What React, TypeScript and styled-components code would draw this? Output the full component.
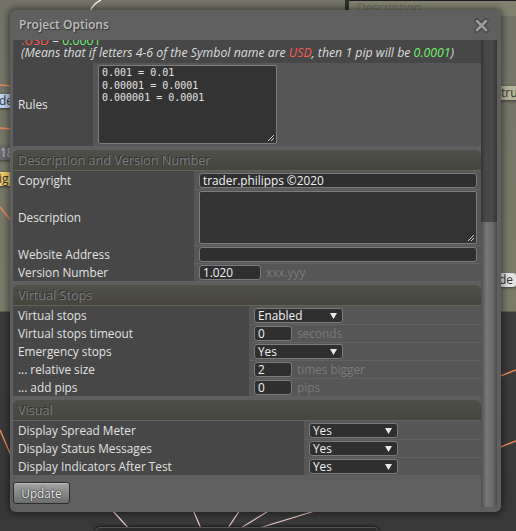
import { useLayoutEffect, useRef } from "react";
import styled, { createGlobalStyle } from "styled-components";

const GlobalStyle = createGlobalStyle`
  html, body { margin: 0; padding: 0; }
  body {
    width: 516px;
    height: 531px;
    overflow: hidden;
    background: #3b3b3b;
    font-family: "Open Sans", "Noto Sans", "Liberation Sans", sans-serif;
  }
`;

// chart canvas that lies behind the dialog
const Desktop = styled.div`
  position: relative;
  width: 516px;
  height: 531px;
  overflow: hidden;
  background: linear-gradient(to bottom, #727266 0, #7b7b6a 311px, #3c3c3c 312px, #383838 100%);
`;

const Wires = styled.svg`
  position: absolute;
  left: 0;
  top: 0;
`;

const TopNode = styled.div`
  position: absolute;
  left: 345px;
  top: -14px;
  width: 190px;
  height: 30px;
  box-sizing: border-box;
  border-top: 15px solid #1e1e1e;
  border-left: 4px solid #2f2f2f;
  background: #818170;
  padding-left: 8px;
  font-size: 12px;
  line-height: 14px;
  color: #6a6a5e;
`;

const BottomNode = styled.div`
  position: absolute;
  left: 95px;
  top: 527px;
  width: 282px;
  height: 24px;
  border-radius: 5px;
  background: #2c2c2c;
  border: 1px solid #555;
  box-shadow: 0 -1px 3px rgba(0, 0, 0, 0.6);
`;

const Tag = styled.span<{ $x: number; $y: number; $bg: string; $fg?: string }>`
  position: absolute;
  left: ${(p) => p.$x}px;
  top: ${(p) => p.$y}px;
  padding: 0 3px;
  height: 14px;
  line-height: 14px;
  font-size: 12px;
  border-radius: 3px;
  background: ${(p) => p.$bg};
  color: ${(p) => p.$fg || "#333"};
  box-shadow: 0 1px 3px rgba(0, 0, 0, 0.5);
`;

const Dialog = styled.div`
  position: absolute;
  left: 10px;
  top: 10px;
  width: 491px;
  height: 502px;
  display: flex;
  flex-direction: column;
  background: #5f5f5f;
  border-radius: 6px;
  box-shadow: 0 0 6px 2px rgba(0, 0, 0, 0.45);
`;

const TitleBar = styled.div`
  height: 30px;
  flex: none;
  display: flex;
  align-items: center;
  justify-content: space-between;
  padding: 0 12px 0 9px;
`;

const Title = styled.div`
  font-size: 12px;
  font-weight: 600;
  color: #bdbdbd;
  text-shadow: 1px 1px 1px #353535;
  margin-top: -1px;
`;

const CloseButton = styled.svg`
  display: block;
`;

const Body = styled.div`
  flex: 1;
  min-height: 0;
  display: flex;
  padding: 0 4px 5px 3px;
`;

const Scroller = styled.div`
  width: 468px;
  overflow: hidden;
`;

const ScrollBar = styled.div`
  width: 16px;
  display: flex;
  flex-direction: column;
  justify-content: flex-end;
  background: linear-gradient(to right, #333 0, #474747 25%, #4a4a4a 70%, #363636 100%);
`;

const Thumb = styled.div`
  height: 285px;
  background: linear-gradient(to right, #4e4e4e 0, #777 35%, #6c6c6c 70%, #4c4c4c 100%);
`;

const Note = styled.div`
  background: #474747;
  padding: 3px 8px 4px;
  font-size: 12.3px;
  line-height: 12px;
  color: #dcdcdc;
`;

const NoteLine = styled.div<{ $italic?: boolean }>`
  font-style: ${(p) => (p.$italic ? "italic" : "normal")};
  white-space: nowrap;
`;

const Red = styled.span`
  color: #ff5a4e;
`;

const Green = styled.span`
  color: #6ef06e;
`;

const Section = styled.div`
  margin-top: 4px;
  display: flex;
  flex-direction: column;
`;

const SectionHead = styled.div`
  height: 20px;
  border-radius: 5px 5px 0 0;
  background: linear-gradient(to bottom, #50504b, #46463f);
  border-bottom: 1px solid #63635a;
  padding-left: 5px;
  font-size: 12.6px;
  line-height: 21px;
  color: #7c7c7c;
  text-shadow: -1px -1px 0 #2c2c2c;
`;

const Row = styled.div<{ $label: number }>`
  display: grid;
  grid-template-columns: ${(p) => p.$label}px 1fr;
`;

const Label = styled.div`
  background: #474747;
  padding-left: 5px;
  display: flex;
  align-items: center;
  font-size: 11.8px;
  line-height: 15px;
  color: #e2e2e2;
  white-space: nowrap;
`;

const Value = styled.div<{ $first?: boolean }>`
  background: #565656;
  border-top: 1px solid ${(p) => (p.$first ? "transparent" : "#616161")};
  padding: 1px 4px 1px 5px;
  height: 15px;
  line-height: 15px;
  display: flex;
  align-items: center;
  gap: 5px;
`;

const RulesValue = styled(Value)`
  height: auto;
  padding: 1px 4px 2px 5px;
`;

const DescValue = styled(Value)`
  height: auto;
`;

const Field = styled.div<{ $w?: number }>`
  box-sizing: border-box;
  width: ${(p) => (p.$w ? `${p.$w}px` : "100%")};
  height: 15px;
  border: 1px solid #7b7b7b;
  border-radius: 3px;
  background: #2f2f2f;
  padding: 0 3px;
  font-size: 11.8px;
  line-height: 13px;
  color: #f2f2f2;
  white-space: nowrap;
  overflow: hidden;
`;

const Picker = styled(Field)`
  display: flex;
  align-items: center;
  justify-content: space-between;
  padding-right: 5px;
`;

const Hint = styled.span`
  font-size: 11.8px;
  line-height: 15px;
  color: #7a7a7a;
`;

const TextBox = styled.div<{ $w: number; $h: number; $mono?: boolean }>`
  box-sizing: border-box;
  width: ${(p) => p.$w}px;
  height: ${(p) => p.$h}px;
  border: 1px solid #7d7d7d;
  border-radius: 2px;
  background: #333;
  padding: 1px 3px 3px;
  display: flex;
  flex-direction: column;
  font-family: ${(p) => (p.$mono ? `"DejaVu Sans Mono", monospace` : "inherit")};
  font-size: 10px;
  line-height: 12.5px;
  color: #e4e4e4;
  white-space: pre;
`;

const Lines = styled.div`
  flex: 1;
`;

const Grip = styled.svg`
  align-self: flex-end;
  margin: 0 -2px -2px 0;
`;

const Footer = styled.div`
  padding: 6px 0 4px;
`;

const Button = styled.button`
  width: 57px;
  height: 22px;
  padding: 0;
  border: 1px solid #2e2e2e;
  border-radius: 3px;
  background: linear-gradient(to bottom, #a4a4a4, #8a8a8a 45%, #6e6e6e);
  box-shadow: inset 0 1px 0 #bdbdbd;
  font-family: inherit;
  font-size: 11.8px;
  color: #ececec;
  text-shadow: 0 0 2px #222, 0 0 1px #222;
`;

function Caret() {
  return (
    <svg width="7" height="6" viewBox="0 0 7 6">
      <polygon points="0,0 7,0 3.5,6" fill="#e8e8e8" />
    </svg>
  );
}

function Select({ value, w }: { value: string; w: number }) {
  return (
    <Picker $w={w}>
      <span>{value}</span>
      <Caret />
    </Picker>
  );
}

function ResizeGrip() {
  return (
    <Grip width="9" height="9" viewBox="0 0 9 9">
      <line x1="8" y1="2" x2="2" y2="8" stroke="#cfcfcf" strokeWidth="1" />
      <line x1="8" y1="5" x2="5" y2="8" stroke="#cfcfcf" strokeWidth="1" />
    </Grip>
  );
}

type Item = { label: string; control: JSX.Element; tall?: boolean };

function Group({ title, label, items }: { title: string; label: number; items: Item[] }) {
  return (
    <Section>
      <SectionHead>{title}</SectionHead>
      {items.map((it, i) => {
        const Cell = it.tall ? DescValue : Value;
        return (
          <Row key={it.label} $label={label}>
            <Label>{it.label}</Label>
            <Cell $first={i === 0}>{it.control}</Cell>
          </Row>
        );
      })}
    </Section>
  );
}

export default function App() {
  const scroller = useRef<HTMLDivElement>(null);

  useLayoutEffect(() => {
    if (scroller.current) scroller.current.scrollTop = 8;
  }, []);

  const description: Item[] = [
    { label: "Copyright", control: <Field>trader.philipps ©2020</Field> },
    {
      label: "Description",
      tall: true,
      control: (
        <TextBox $w={278} $h={53}>
          <Lines />
          <ResizeGrip />
        </TextBox>
      ),
    },
    { label: "Website Address", control: <Field /> },
    {
      label: "Version Number",
      control: (
        <>
          <Field $w={62}>1.020</Field>
          <Hint>xxx.yyy</Hint>
        </>
      ),
    },
  ];

  const stops: Item[] = [
    { label: "Virtual stops", control: <Select value="Enabled" w={89} /> },
    {
      label: "Virtual stops timeout",
      control: (
        <>
          <Field $w={38}>0</Field>
          <Hint>seconds</Hint>
        </>
      ),
    },
    { label: "Emergency stops", control: <Select value="Yes" w={89} /> },
    {
      label: "... relative size",
      control: (
        <>
          <Field $w={38}>2</Field>
          <Hint>times bigger</Hint>
        </>
      ),
    },
    {
      label: "... add pips",
      control: (
        <>
          <Field $w={38}>0</Field>
          <Hint>pips</Hint>
        </>
      ),
    },
  ];

  const visual: Item[] = [
    { label: "Display Spread Meter", control: <Select value="Yes" w={89} /> },
    { label: "Display Status Messages", control: <Select value="Yes" w={89} /> },
    { label: "Display Indicators After Test", control: <Select value="Yes" w={89} /> },
  ];

  return (
    <>
      <GlobalStyle />
      <Desktop>
        <Wires width="516" height="531" viewBox="0 0 516 531">
          <path d="M90 11 Q94 3 101 0" stroke="#f0f0f0" strokeWidth="1.4" fill="none" />
          <line x1="0" y1="85" x2="12" y2="86" stroke="#ef8a58" strokeWidth="1.4" />
          <line x1="0" y1="128" x2="12" y2="129" stroke="#ef8a58" strokeWidth="1.4" />
          <line x1="0" y1="207" x2="12" y2="222" stroke="#ef8a58" strokeWidth="1.4" />
          <line x1="0" y1="430" x2="12" y2="458" stroke="#ef8a58" strokeWidth="1.4" />
          <line x1="498" y1="377" x2="516" y2="370" stroke="#ef8a58" strokeWidth="1.4" />
          <line x1="498" y1="448" x2="516" y2="441" stroke="#ef8a58" strokeWidth="1.4" />
          <line x1="348" y1="0" x2="382" y2="12" stroke="#f0b0a0" strokeWidth="1.2" />
          <line x1="112" y1="510" x2="131" y2="531" stroke="#f4cccc" strokeWidth="1.2" />
          <line x1="193" y1="510" x2="202" y2="531" stroke="#f4cccc" strokeWidth="1.2" />
          <line x1="240" y1="510" x2="226" y2="531" stroke="#f4cccc" strokeWidth="1.2" />
          <line x1="270" y1="510" x2="236" y2="531" stroke="#f4cccc" strokeWidth="1.2" />
          <line x1="318" y1="510" x2="256" y2="529" stroke="#f4cccc" strokeWidth="1.2" />
        </Wires>
        <TopNode>Description</TopNode>
        <BottomNode />
        <Tag $x={-4} $y={94} $bg="#bcd4f4">de</Tag>
        <Tag $x={-3} $y={146} $bg="#6a6a6a" $fg="#c0c0c0">18</Tag>
        <Tag $x={-4} $y={172} $bg="#f2cf6a">ig</Tag>
        <Tag $x={498} $y={86} $bg="#b4b49a">true</Tag>
        <Tag $x={496} $y={273} $bg="#e2e2e2">de</Tag>

        <Dialog>
          <TitleBar>
            <Title>Project Options</Title>
            <CloseButton width="15" height="15" viewBox="0 0 15 15">
              <path
                d="M3 3 L12 12 M12 3 L3 12"
                stroke="#3c3c3c"
                strokeWidth="5"
                strokeLinecap="round"
              />
              <path
                d="M3 3 L12 12 M12 3 L3 12"
                stroke="#9a9a9a"
                strokeWidth="3"
                strokeLinecap="round"
              />
            </CloseButton>
          </TitleBar>
          <Body>
            <Scroller ref={scroller}>
              <Note>
                <NoteLine>
                  <Red>:USD</Red> = <Green>0.0001</Green>
                </NoteLine>
                <NoteLine $italic>
                  (Means that if letters 4-6 of the Symbol name are <Red>USD</Red>, then 1 pip will be{" "}
                  <Green>0.0001</Green>)
                </NoteLine>
              </Note>
              <Row $label={80}>
                <Label>Rules</Label>
                <RulesValue $first>
                  <TextBox $w={179} $h={79} $mono>
                    <Lines>{"0.001 = 0.01\n0.00001 = 0.0001\n0.000001 = 0.0001"}</Lines>
                    <ResizeGrip />
                  </TextBox>
                </RulesValue>
              </Row>
              <Group title="Description and Version Number" label={181} items={description} />
              <Group title="Virtual Stops" label={236} items={stops} />
              <Group title="Visual" label={291} items={visual} />
              <Footer>
                <Button>Update</Button>
              </Footer>
            </Scroller>
            <ScrollBar>
              <Thumb />
            </ScrollBar>
          </Body>
        </Dialog>
      </Desktop>
    </>
  );
}
